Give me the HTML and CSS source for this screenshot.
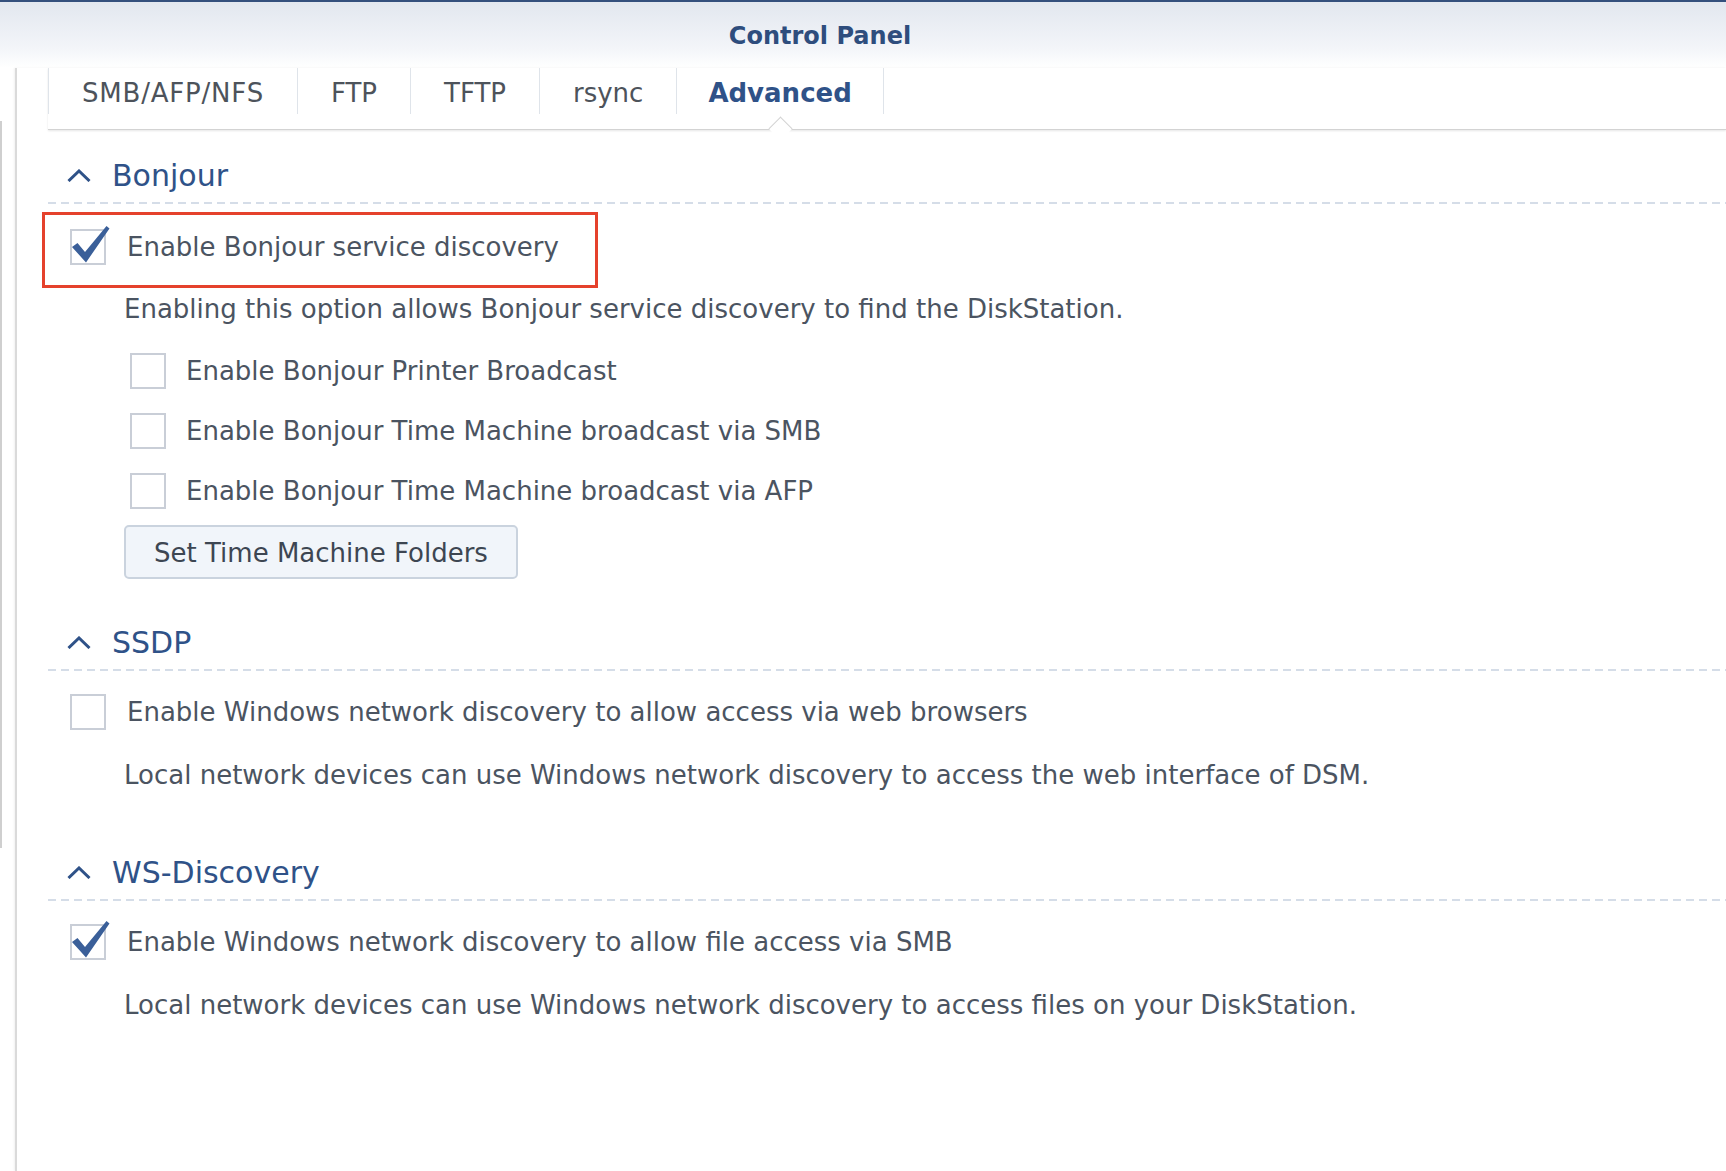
FILE: index.html
```html
<!DOCTYPE html>
<html lang="en">

<head>
    <meta charset="UTF-8">
    <title>Control Panel</title>
    <link rel="stylesheet" href="styles.css">
</head>

<body>
    <div class="window">
        <div class="titlebar">
            <h1 class="window-title">Control Panel</h1>
        </div>

        <div class="window-body">
            <div class="side-strip">
                <div class="side-scroll"></div>
            </div>

            <div class="panel">
                <div class="tabs">
                    <div class="tab tab-wide">SMB/AFP/NFS</div>
                    <div class="tab">FTP</div>
                    <div class="tab">TFTP</div>
                    <div class="tab">rsync</div>
                    <div class="tab active">Advanced</div>
                </div>

                <div class="content">
                    <!-- Bonjour -->
                    <div class="section">
                        <div class="section-head">
                            <svg class="chevron" viewBox="0 0 24 13"><path d="M1.5 12 L12 2 L22.5 12" /></svg>
                            <span>Bonjour</span>
                        </div>
                        <div class="highlight">
                            <div class="check-row">
                                <span class="checkbox checked">
                                    <svg viewBox="0 0 36 36"><path d="M2 18 L7.5 14 L15 23 L36.5 -3 L39.5 -0.5 L16 33.5 Z" /></svg>
                                </span>
                                <span class="check-label">Enable Bonjour service discovery</span>
                            </div>
                        </div>
                        <p class="desc">Enabling this option allows Bonjour service discovery to find the DiskStation.</p>
                        <div class="sub-options">
                            <div class="check-row">
                                <span class="checkbox"></span>
                                <span class="check-label">Enable Bonjour Printer Broadcast</span>
                            </div>
                            <div class="check-row">
                                <span class="checkbox"></span>
                                <span class="check-label">Enable Bonjour Time Machine broadcast via SMB</span>
                            </div>
                            <div class="check-row">
                                <span class="checkbox"></span>
                                <span class="check-label">Enable Bonjour Time Machine broadcast via AFP</span>
                            </div>
                        </div>
                        <button class="btn">Set Time Machine Folders</button>
                    </div>

                    <!-- SSDP -->
                    <div class="section section-ssdp">
                        <div class="section-head">
                            <svg class="chevron" viewBox="0 0 24 13"><path d="M1.5 12 L12 2 L22.5 12" /></svg>
                            <span>SSDP</span>
                        </div>
                        <div class="check-row top-row">
                            <span class="checkbox"></span>
                            <span class="check-label">Enable Windows network discovery to allow access via web browsers</span>
                        </div>
                        <p class="desc desc-gap">Local network devices can use Windows network discovery to access the web interface of DSM.</p>
                    </div>

                    <!-- WS-Discovery -->
                    <div class="section section-ws">
                        <div class="section-head">
                            <svg class="chevron" viewBox="0 0 24 13"><path d="M1.5 12 L12 2 L22.5 12" /></svg>
                            <span>WS-Discovery</span>
                        </div>
                        <div class="check-row top-row">
                            <span class="checkbox checked">
                                <svg viewBox="0 0 36 36"><path d="M2 18 L7.5 14 L15 23 L36.5 -3 L39.5 -0.5 L16 33.5 Z" /></svg>
                            </span>
                            <span class="check-label">Enable Windows network discovery to allow file access via SMB</span>
                        </div>
                        <p class="desc desc-gap">Local network devices can use Windows network discovery to access files on your DiskStation.</p>
                    </div>
                </div>
            </div>
        </div>
    </div>
</body>

</html>
```

FILE: styles.css
```css
:root {
    --title-blue: #2e4d7d;
    --head-blue: #2f5288;
    --text-color: #4b5461;
    --tab-color: #4d535b;
    --check-blue: #3a5f99;
    --box-border: #c9ced7;
}

html,
body {
    margin: 0;
    height: 100%;
    overflow: hidden;
}

body {
    font-family: 'DejaVu Sans', Verdana, sans-serif;
    font-size: 26px;
    color: var(--text-color);
    background-color: white;
}

.window {
    display: flex;
    flex-direction: column;
    height: 100%;
}

.titlebar {
    height: 66px;
    border-top: 2px solid #34507d;
    background: linear-gradient(#e2e7ef, #f3f5f9 70%, #ffffff);
    display: flex;
    align-items: center;
}

.window-title {
    width: 1640px;
    margin: 2px 0 0;
    text-align: center;
    font-size: 24px;
    font-weight: bold;
    color: var(--title-blue);
}

.window-body {
    flex: 1;
    display: flex;
}

.side-strip {
    width: 15px;
    flex-shrink: 0;
}

.side-scroll {
    width: 2px;
    height: 727px;
    margin-top: 53px;
    background-color: #cfcfcf;
}

.panel {
    flex: 1;
    border-left: 2px solid #dadada;
    box-shadow: -1px 0 2px rgba(0, 0, 0, 0.06);
    padding-left: 31px;
}

/* tab strip */
.tabs {
    display: flex;
    padding-bottom: 15px;
    border-bottom: 1px solid #d3d3d3;
    box-shadow: 0 1px 2px rgba(0, 0, 0, 0.1);
}

.tab {
    position: relative;
    height: 46px;
    line-height: 50px;
    padding: 0 33px;
    border-left: 1px solid #dfe4ea;
    color: var(--tab-color);
    white-space: nowrap;
}

.tab-wide {
    letter-spacing: 0.8px;
}

.tab.active {
    padding: 0 31px;
    font-weight: bold;
    color: var(--head-blue);
    border-right: 1px solid #dfe4ea;
}

.tab.active::after {
    content: '';
    position: absolute;
    left: 50%;
    bottom: -23px;
    width: 16px;
    height: 16px;
    margin-left: -8px;
    background-color: white;
    border-left: 1px solid #d3d3d3;
    border-top: 1px solid #d3d3d3;
    transform: rotate(45deg);
}

/* sections */
.content {
    padding-top: 18px;
}

.section-head {
    display: flex;
    align-items: center;
    gap: 21px;
    height: 54px;
    padding-bottom: 2px;
    padding-left: 19px;
    font-size: 30px;
    color: var(--head-blue);
    background: repeating-linear-gradient(to right, #d5dde8 0 8px, transparent 8px 13px) left bottom / 100% 2px no-repeat;
}

.chevron {
    width: 24px;
    height: 13px;
    fill: none;
    stroke: var(--head-blue);
    stroke-width: 3;
}

.section-ssdp {
    margin-top: 36px;
}

.section-ws {
    margin-top: 52px;
}

.highlight {
    display: flex;
    width: fit-content;
    margin: 8px 0 0 -6px;
    padding: 14px 36px 20px 25px;
    border: 3px solid #e5412c;
}

.check-row {
    display: flex;
    align-items: center;
    gap: 21px;
    height: 36px;
    white-space: nowrap;
}

.top-row {
    margin: 23px 0 0 22px;
}

.checkbox {
    position: relative;
    width: 32px;
    height: 32px;
    flex-shrink: 0;
    border: 2px solid var(--box-border);
    background-color: white;
}

.checkbox svg {
    position: absolute;
    left: -2px;
    top: -2px;
    width: 36px;
    height: 36px;
    overflow: visible;
    fill: var(--check-blue);
}

.desc {
    margin: 3px 0 0 76px;
    line-height: 36px;
}

.desc-gap {
    margin-top: 27px;
}

.sub-options {
    display: flex;
    flex-direction: column;
    gap: 24px;
    margin: 26px 0 0 82px;
}

.sub-options .check-row {
    gap: 20px;
}

.btn {
    display: block;
    margin: 16px 0 0 76px;
    width: 394px;
    height: 54px;
    padding-top: 3px;
    font-family: inherit;
    font-size: 26px;
    color: #3d4652;
    background-color: #f1f5fa;
    border: 2px solid #cad3de;
    border-radius: 5px;
}
```
